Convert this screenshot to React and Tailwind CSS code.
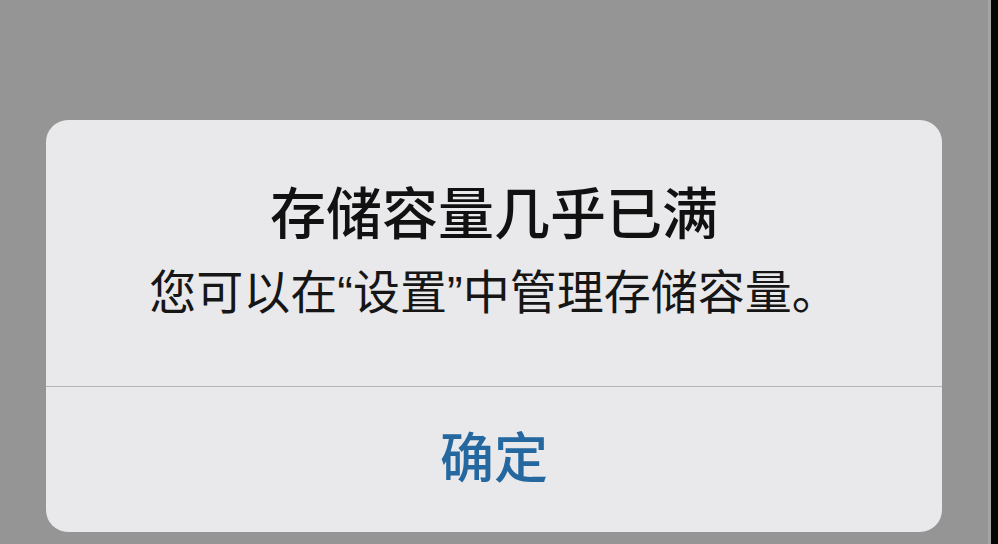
export default function App() {
  const font = { fontFamily: '"Liberation Sans", "Noto Sans CJK SC", sans-serif' };

  return (
    <div className="flex h-[544px] w-[998px] overflow-hidden bg-[#959595]" style={font}>
      <div className="flex-1 pl-[46px] pt-[120px]">
        {/* alert card */}
        <div className="flex h-[412px] w-[896px] flex-col overflow-hidden rounded-[22px] bg-[#e9e9eb]">
          <div className="flex flex-col items-center pt-[63px]">
            <h1 className="text-[56px] font-medium leading-[64px] text-[#111]">存储容量几乎已满</h1>
            <p className="mt-[20px] text-[47px] leading-[52px] text-[#161616]">
              您可以在“设置”中管理存储容量。
            </p>
          </div>
          <div className="mt-auto h-px bg-[#b3b3b5]" />
          <button className="flex h-[145px] items-center justify-center text-[54px] font-medium text-[#24689f]">
            确定
          </button>
        </div>
      </div>
      <div className="w-[3px] bg-[#a4a4a4]" />
      <div className="w-[7px] bg-[#050505]" />
    </div>
  );
}
